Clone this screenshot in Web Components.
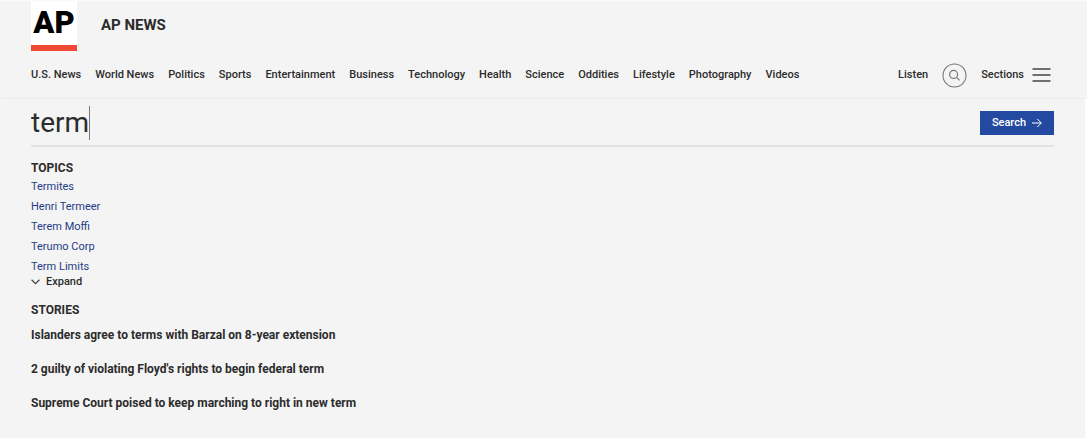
<!DOCTYPE html>
<html lang="en">
<head>
<meta charset="utf-8">
<title>AP News</title>
<style>
  body {
    margin: 0;
    background: #fff;
    color: #2c2c2c;
    font-family: "Roboto", sans-serif;
    font-size: 11px;
    line-height: 20px;
  }
</style>
</head>
<body>
<ap-page></ap-page>

<template id="page">
  <style>
    :host { display: block; }
  </style>
  <ap-header></ap-header>
  <ap-search-panel>
    <ap-search-box></ap-search-box>
    <ap-topics></ap-topics>
    <ap-stories></ap-stories>
  </ap-search-panel>
</template>

<template id="header">
  <style>
    :host { display: block; background: #f4f4f4; border-top: 1px solid #fafafa; padding: 0 34px 0 31px; }
    .brand { display: flex; align-items: flex-start; gap: 24px; height: 50px; }
    .bar { display: flex; align-items: center; justify-content: space-between; height: 48px; }
    .name { font-size: 15px; font-weight: bold; line-height: 24px; padding-top: 12px; }
    .tools { display: flex; align-items: center; gap: 14px; font-weight: 500; }
    a { color: inherit; text-decoration: none; }
    button { display: flex; align-items: center; border: 0; padding: 0; background: none; color: inherit; font: inherit; }
    .menu { gap: 8px; padding-right: 2px; }
    svg { display: block; }
  </style>
  <div class="brand"><ap-logo></ap-logo><span class="name">AP NEWS</span></div>
  <div class="bar">
    <ap-nav></ap-nav>
    <div class="tools">
      <a href="#listen">Listen</a>
      <button type="button" aria-label="Search">
        <svg width="25" height="25" viewBox="0 0 25 25" fill="none" stroke="#777">
          <circle cx="12.5" cy="12.5" r="11.5" stroke-width="1.1"/>
          <circle cx="11.6" cy="11.4" r="4" stroke-width="1.2"/>
          <path d="M14.6 14.4 17.6 17.4" stroke-width="1.2"/>
        </svg>
      </button>
      <button type="button" class="menu">Sections
        <svg width="19" height="14" viewBox="0 0 19 14" stroke="#444" stroke-width="1.6">
          <path d="M.5 1h18M.5 7h18M.5 13h18"/>
        </svg>
      </button>
    </div>
  </div>
</template>

<template id="logo">
  <style>
    :host { display: block; box-sizing: border-box; width: 46px; height: 50px; background: #fff; border-bottom: 6px solid #ee4a37; color: #000; text-align: center; }
    span { display: block; font: 900 31px/43px "Roboto", sans-serif; }
  </style>
  <span>AP</span>
</template>

<template id="nav">
  <style>
    nav { display: flex; gap: 14px; font-weight: 500; }
    a { color: inherit; text-decoration: none; white-space: nowrap; }
  </style>
  <nav>
    <a href="#us">U.S. News</a><a href="#world">World News</a><a href="#politics">Politics</a><a href="#sports">Sports</a><a href="#entertainment">Entertainment</a><a href="#business">Business</a><a href="#technology">Technology</a><a href="#health">Health</a><a href="#science">Science</a><a href="#oddities">Oddities</a><a href="#lifestyle">Lifestyle</a><a href="#photography">Photography</a><a href="#videos">Videos</a>
  </nav>
</template>

<template id="panel">
  <style>
    :host { display: block; margin: 0 3px 0 1px; padding: 7px 30px 25px; background: #f4f4f4; box-shadow: 0 0 2px #ddd; }
  </style>
  <slot></slot>
</template>

<template id="search-box">
  <style>
    :host { display: block; }
    form { display: flex; align-items: center; justify-content: space-between; height: 34px; padding-bottom: 5px; border-bottom: 2px solid #e2e2e2; margin: 0; }
    label { display: flex; align-items: center; height: 34px; }
    input { field-sizing: content; border: 0; padding: 0; margin: 0; background: none; outline: 0; color: inherit; font: inherit; font-size: 28px; line-height: 34px; }
    i { width: 1px; height: 34px; background: #777; }
    button { display: flex; align-items: center; gap: 6px; height: 24px; border: 0; padding: 0 12px; background: #2449a0; color: #fff; font: inherit; font-weight: 500; }
  </style>
  <form>
    <label><input type="text" value="term" aria-label="Search"><i></i></label>
    <button type="submit">Search
      <svg width="10" height="10" viewBox="0 0 10 10" fill="none" stroke="#fff"><path d="M0 5h9.2M5.3 1 9.3 5 5.3 9"/></svg>
    </button>
  </form>
</template>

<template id="topics">
  <style>
    :host { display: block; padding-top: 12px; }
    h2 { margin: 0; font-size: 12px; line-height: 18px; }
    ul { list-style: none; margin: 0; padding: 0; }
    a { color: #1f3c85; text-decoration: none; }
    button { display: flex; align-items: center; gap: 6px; border: 0; padding: 0; background: none; color: inherit; font: inherit; font-weight: 500; line-height: 10px; }
  </style>
  <h2>TOPICS</h2>
  <ul>
    <li><a href="#1">Termites</a></li>
    <li><a href="#2">Henri Termeer</a></li>
    <li><a href="#3">Terem Moffi</a></li>
    <li><a href="#4">Terumo Corp</a></li>
    <li><a href="#5">Term Limits</a></li>
  </ul>
  <button type="button">
    <svg width="9" height="6" viewBox="0 0 9 6" fill="none" stroke="#444" stroke-width="1.3"><path d="M.6.8 4.5 4.6 8.4.8"/></svg>
    Expand
  </button>
</template>

<template id="stories">
  <style>
    :host { display: block; padding-top: 14px; }
    h2 { margin: 0 0 6px; font-size: 12px; line-height: 18px; }
    ul { display: grid; gap: 14px; list-style: none; margin: 0; padding: 0; font-size: 12px; font-weight: bold; }
    a { color: inherit; text-decoration: none; }
  </style>
  <h2>STORIES</h2>
  <ul>
    <li><a href="#s1">Islanders agree to terms with Barzal on 8-year extension</a></li>
    <li><a href="#s2">2 guilty of violating Floyd's rights to begin federal term</a></li>
    <li><a href="#s3">Supreme Court poised to keep marching to right in new term</a></li>
  </ul>
</template>

<script>
  const define = (name, templateId) => customElements.define(name, class extends HTMLElement {
    constructor() {
      super();
      this.attachShadow({ mode: "open" })
        .append(document.getElementById(templateId).content.cloneNode(true));
    }
  });
  define("ap-logo", "logo");
  define("ap-nav", "nav");
  define("ap-header", "header");
  define("ap-search-panel", "panel");
  define("ap-search-box", "search-box");
  define("ap-topics", "topics");
  define("ap-stories", "stories");
  define("ap-page", "page");
</script>
</body>
</html>
